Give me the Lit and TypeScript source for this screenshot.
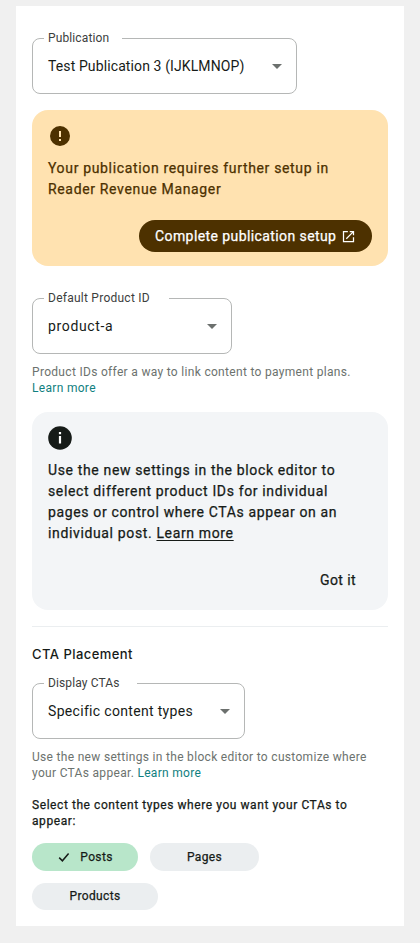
import { LitElement, html, css } from "lit";
import { customElement, property } from "lit/decorators.js";

@customElement("outlined-select")
class OutlinedSelect extends LitElement {
  @property() label = "";
  @property() value = "";

  static styles = css`
    :host { display: block; height: 56px; box-sizing: border-box; position: relative; }
    .box {
      display: flex; align-items: center; justify-content: space-between;
      box-sizing: border-box; height: 56px; padding: 0 14px 0 15px;
      border: 1px solid #b5b7b6; border-radius: 8px;
      font-size: 14px; line-height: 20px; color: #161b18; white-space: nowrap;
      letter-spacing: var(--value-spacing, 0.32px);
    }
    .label {
      position: absolute; left: 12px; top: -8px; box-sizing: border-box;
      width: var(--notch); padding-left: 4px; background: #fff;
      font-size: 12px; line-height: 16px; color: #3c403d; white-space: nowrap;
      letter-spacing: var(--label-spacing, 0.2px);
    }
    svg { display: block; margin-top: 1px; }
  `;

  render() {
    return html`
      <div class="box">
        <span>${this.value}</span>
        <svg width="10" height="5" viewBox="0 0 10 5"><path d="M0 0h10L5 5z" fill="#6c706e" /></svg>
      </div>
      <span class="label">${this.label}</span>
    `;
  }
}

@customElement("content-chip")
class ContentChip extends LitElement {
  @property({ type: Boolean, reflect: true }) selected = false;

  static styles = css`
    :host {
      display: flex; align-items: center; justify-content: center; gap: 9px;
      height: 27.6px; border-radius: 14px; background: #ebeef0; color: #161b18;
      font-size: 12px; line-height: 16px; letter-spacing: 0.35px; -webkit-text-stroke: 0.25px currentColor;
    }
    :host([selected]) { background: #b8e6ca; }
  `;

  render() {
    return html`
      ${this.selected
        ? html`<svg width="14" height="14" viewBox="0 0 14 14" fill="none" stroke="#161b18" stroke-width="1.5"><path d="M2.200 7.600l3.200 3.200L11.600 3.400" /></svg>`
        : null}
      <slot></slot>
    `;
  }
}

@customElement("app-root")
class AppRoot extends LitElement {
  static styles = css`
    :host {
      display: block; box-sizing: border-box; height: 943px; padding: 6px 16px 17px;
      background: #f0f0f0; font-family: Roboto, "Noto Sans", sans-serif; color: #161b18;
    }
    .card { box-sizing: border-box; height: 920px; padding: 32px 16px 0; background: #fff; }
    .line { display: block; white-space: nowrap; }
    .publication { width: 265px; --notch: 78px; --label-spacing: 0.12px; --value-spacing: 0.11px; }
    .product { width: 200px; --notch: 125px; --label-spacing: 0.25px; --value-spacing: 0.65px; }
    .display { width: 213px; --notch: 93px; --label-spacing: 0.12px; }
    .notice {
      box-sizing: border-box; border-radius: 16px; padding: 14px 16px;
      font-size: 14px; line-height: 21px; letter-spacing: 0.66px;
      -webkit-text-stroke: 0.25px currentColor;
    }
    .notice svg { display: block; -webkit-text-stroke: 0; }
    .notice p { margin: 0; }
    .warning { margin-top: 16px; height: 156px; background: #ffe2b0; color: #4d3100; }
    .warning p { margin-top: 10px; }
    .actions { display: flex; justify-content: flex-end; }
    .cta {
      display: flex; align-items: center; box-sizing: border-box; width: 233px; height: 32px;
      margin-top: 20px; padding-left: 16px; gap: 5px; border-radius: 16px;
      background: #4d3100; color: #fff; letter-spacing: 0.41px; white-space: nowrap;
    }
    .info { margin-top: 16px; height: 198px; background: #f3f5f7; letter-spacing: 0.64px; }
    .info p { margin-top: 10px; }
    .info a { color: inherit; text-decoration: underline; text-underline-offset: 2px; }
    .dismiss { margin: 26px 16px 0 0; letter-spacing: 0.4px; }
    .gap { margin-top: 32px; }
    .help { margin: 10px 0 0; font-size: 12px; line-height: 16px; color: #6c726e; letter-spacing: 0.31px; }
    .help a { color: #108080; text-decoration: none; }
    hr { margin: 16px 0 0; border: 0; height: 1px; background: #ebeef0; }
    h2 {
      margin: 17px 0 0; font-family: Inter, sans-serif; font-size: 13px; font-weight: 500;
      line-height: 20px; letter-spacing: 0.45px;
    }
    .display { margin-top: 19px; }
    .question {
      margin: 16px 0 0; font-size: 12px; line-height: 16px; letter-spacing: 0.57px;
      -webkit-text-stroke: 0.25px currentColor;
    }
    .chips { display: flex; flex-wrap: wrap; gap: 12px; margin-top: 14px; }
    .posts { width: 106px; }
    .pages { width: 109px; }
    .products { width: 126px; }
  `;

  render() {
    return html`
      <main class="card">
        <outlined-select class="publication" label="Publication" value="Test Publication 3 (IJKLMNOP)"></outlined-select>

        <section class="notice warning">
          <svg width="24" height="24" viewBox="0 0 24 24">
            <path fill="#4d3100" fill-rule="evenodd" d="M12 2a10 10 0 1 0 0 20 10 10 0 0 0 0-20zm1 15h-2v-2h2v2zm0-4h-2V7h2v6z" />
          </svg>
          <p>
            <span class="line">Your publication requires further setup in</span>
            <span class="line">Reader Revenue Manager</span>
          </p>
          <div class="actions">
            <a class="cta">
              <span>Complete publication setup</span>
              <svg width="15" height="15" viewBox="0 0 24 24">
                <path fill="#fff" d="M19 19H5V5h6V3H3v18h18v-8h-2v6zM14 3v2h3.600l-9.800 9.800 1.400 1.400L19 6.400V10h2V3h-7z" />
              </svg>
            </a>
          </div>
        </section>

        <outlined-select class="product gap" label="Default Product ID" value="product-a"></outlined-select>
        <p class="help">
          <span class="line">Product IDs offer a way to link content to payment plans.</span>
          <span class="line"><a>Learn more</a></span>
        </p>

        <section class="notice info">
          <svg width="24" height="24" viewBox="0 0 24 24">
            <circle cx="12" cy="12" r="11.800" fill="#161b18" />
            <path fill="#fff" d="M10.900 6h2.200v2.200h-2.200zM10.900 10h2.200v7.600h-2.200z" />
          </svg>
          <p>
            <span class="line">Use the new settings in the block editor to</span>
            <span class="line">select different product IDs for individual</span>
            <span class="line">pages or control where CTAs appear on an</span>
            <span class="line">individual post. <a>Learn more</a></span>
          </p>
          <div class="actions"><span class="dismiss">Got it</span></div>
        </section>

        <hr />
        <h2>CTA Placement</h2>
        <outlined-select class="display" label="Display CTAs" value="Specific content types"></outlined-select>
        <p class="help">
          <span class="line">Use the new settings in the block editor to customize where</span>
          <span class="line">your CTAs appear. <a>Learn more</a></span>
        </p>

        <p class="question">
          <span class="line">Select the content types where you want your CTAs to</span>
          <span class="line">appear:</span>
        </p>
        <div class="chips">
          <content-chip class="posts" selected>Posts</content-chip>
          <content-chip class="pages">Pages</content-chip>
          <content-chip class="products">Products</content-chip>
        </div>
      </main>
    `;
  }
}
